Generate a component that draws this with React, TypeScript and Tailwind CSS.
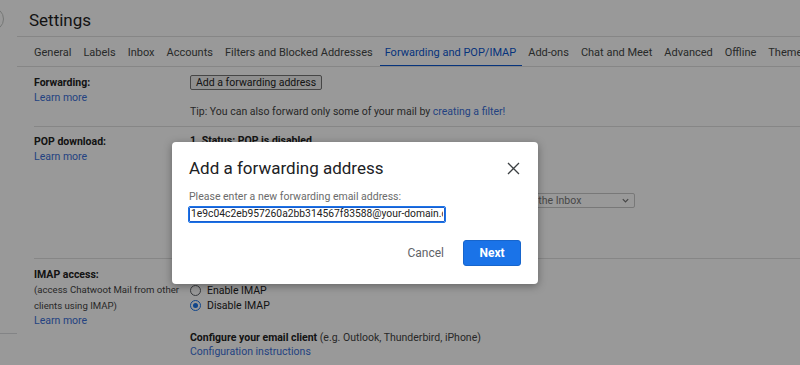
import React from "react";

const tabs = [
  "General",
  "Labels",
  "Inbox",
  "Accounts",
  "Filters and Blocked Addresses",
  "Forwarding and POP/IMAP",
  "Add-ons",
  "Chat and Meet",
  "Advanced",
  "Offline",
  "Themes",
];

const Radio = ({ checked, label }: { checked?: boolean; label: string }) => (
  <div className="flex items-center gap-[6px] h-[15px]">
    <span
      className={`w-[11px] h-[11px] rounded-full border flex items-center justify-center ${
        checked ? "border-[#1a73e8]" : "border-[#5f6368]"
      }`}
    >
      {checked && <span className="w-[5px] h-[5px] rounded-full bg-[#1a73e8]" />}
    </span>
    <span>{label}</span>
  </div>
);

const App = () => {
  return (
    <div
      className="relative w-[800px] h-[365px] overflow-hidden bg-white text-[#222] text-[10.5px]"
      style={{ fontFamily: "Roboto, 'Liberation Sans', sans-serif" }}
    >
      <div className="flex">
        {/* left rail */}
        <div className="w-[17px] shrink-0 flex flex-col">
          <div className="w-[24px] h-[24px] rounded-full border border-[#c4c7c5] -ml-[20px] mt-[7px]" />
          <div className="mt-[302px] h-px bg-[#dadce0]" />
        </div>

        <div className="flex-1 min-w-0">
          {/* header */}
          <div className="h-[37px] border-b border-[#e0e0e0] flex items-center pl-[12px] pt-[5px]">
            <span className="text-[17px] text-[#1f1f1f]">Settings</span>
          </div>

          {/* tabs */}
          <div className="h-[30px] pt-[3px] border-b border-[#e0e0e0] flex gap-[12px] pl-[17px] whitespace-nowrap overflow-hidden text-[11px] text-[#444746]">
            {tabs.map((t) => (
              <div
                key={t}
                className={`relative flex items-center ${
                  t === "Forwarding and POP/IMAP" ? "text-[#0b57d0]" : ""
                }`}
              >
                {t}
                {t === "Forwarding and POP/IMAP" && (
                  <span className="absolute left-[-5px] right-[-6px] bottom-[-1px] h-[2px] bg-[#0b57d0]" />
                )}
              </div>
            ))}
          </div>

          <div className="pl-[17px]">
            {/* forwarding */}
            <div className="grid grid-cols-[156px_1fr] border-b border-[#e0e0e0] h-[60px] pt-[8px] leading-[15px]">
              <div>
                <div className="font-bold">Forwarding:</div>
                <div className="text-[#3b6fd8]">Learn more</div>
              </div>
              <div>
                <button className="h-[15px] px-[5px] leading-[13px] border border-[#767676] rounded-[2px] bg-[#efefef] text-[10.5px] text-[#222]">
                  Add a forwarding address
                </button>
                <div className="mt-[14px] text-[#444]">
                  Tip: You can also forward only some of your mail by{" "}
                  <span className="text-[#3b6fd8]">creating a filter!</span>
                </div>
              </div>
            </div>

            {/* POP */}
            <div className="grid grid-cols-[156px_1fr] border-b border-[#e0e0e0] h-[132px] pt-[6px] leading-[15px]">
              <div className="pt-[1px]">
                <div className="font-bold">POP download:</div>
                <div className="text-[#3b6fd8]">Learn more</div>
              </div>
              <div>
                <div className="font-bold">1. Status: POP is disabled</div>
                <div className="mt-[1px]">
                  <Radio label="Enable POP for all mail" />
                  <Radio label="Enable POP for mail that arrives from now on" />
                </div>
                <div className="flex items-center gap-[6px] mt-[6px]">
                  <span className="font-bold">2. When messages are accessed with POP</span>
                  <span className="ml-auto mr-[165px] w-[240px] h-[15px] border border-[#c8c8c8] rounded-[2px] flex items-center justify-between px-[4px] text-[#777]">
                    keep Chatwoot Mail's copy in the Inbox
                    <svg width="9" height="9" viewBox="0 0 10 10">
                      <path d="M2 3.5 L5 6.5 L8 3.5" stroke="#777" strokeWidth="1.4" fill="none" />
                    </svg>
                  </span>
                </div>
                <div className="mt-[7px] font-bold">3. Configure your email client</div>
                <div className="text-[#3b6fd8]">Configuration instructions</div>
              </div>
            </div>

            {/* IMAP */}
            <div className="grid grid-cols-[156px_1fr] pt-[8px] leading-[15.3px]">
              <div className="whitespace-nowrap">
                <div className="font-bold">IMAP access:</div>
                <div className="text-[#444] text-[9.6px]">(access Chatwoot Mail from other</div>
                <div className="text-[#444] text-[9.6px]">clients using IMAP)</div>
                <div className="text-[#3b6fd8]">Learn more</div>
              </div>
              <div className="pt-[16px]">
                <Radio label="Enable IMAP" />
                <Radio checked label="Disable IMAP" />
                <div className="mt-[18px] leading-[14px]">
                  <span className="font-bold">Configure your email client</span>{" "}
                  <span className="text-[#444]">(e.g. Outlook, Thunderbird, iPhone)</span>
                </div>
                <div className="text-[#3b6fd8] leading-[14px]">Configuration instructions</div>
              </div>
            </div>
          </div>
        </div>
      </div>

      {/* overlay */}
      <div className="absolute inset-0 bg-black/40" />

      {/* dialog */}
      <div className="absolute left-[172px] top-[142px] w-[366px] h-[142px] bg-white rounded-[4px] shadow-[0_2px_8px_rgba(0,0,0,0.35)] px-[17px] pt-[14px]">
        <div className="flex items-center justify-between">
          <span className="text-[17px] text-[#202124]">Add a forwarding address</span>
          <svg width="13" height="13" viewBox="0 0 13 13" className="mr-[1px]">
            <path d="M1 1 L12 12 M12 1 L1 12" stroke="#3c4043" strokeWidth="1.3" />
          </svg>
        </div>
        <div className="mt-[8px] text-[#6b6b6b] leading-[14px]">
          Please enter a new forwarding email address:
        </div>
        <input
          readOnly
          value="1e9c04c2eb957260a2bb314567f83588@your-domain.com"
          className="mt-[3px] w-[256px] h-[15px] border border-[#1a5fd0] outline outline-1 outline-[#1a73e8] rounded-[1px] px-[1px] text-[10.3px] text-[#222] bg-white"
        />
        <div className="flex justify-end items-center gap-[19px] mt-[18px]">
          <span className="text-[12px] text-[#5f6368]">Cancel</span>
          <button className="w-[58px] h-[26px] rounded-[3px] bg-[#1a73e8] border border-[#1765cc] text-white text-[12px] font-bold">
            Next
          </button>
        </div>
      </div>
    </div>
  );
};

export default App;
